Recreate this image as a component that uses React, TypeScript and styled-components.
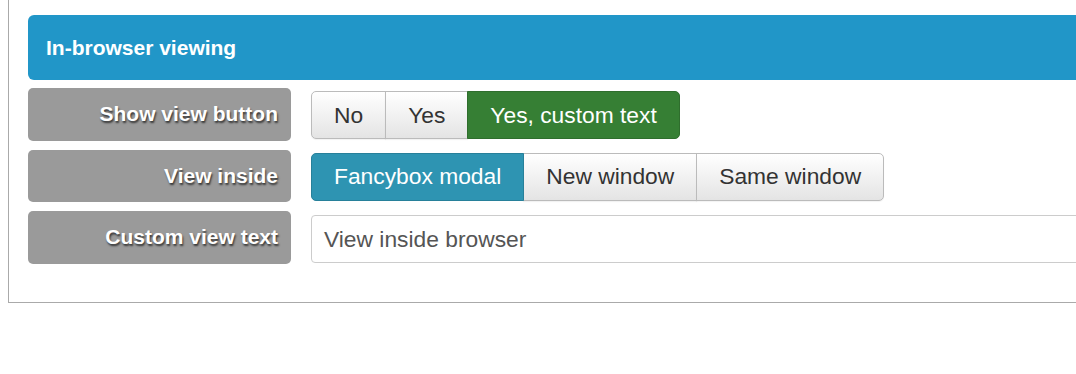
import React from "react";
import styled, { createGlobalStyle, css } from "styled-components";

const Global = createGlobalStyle`
  html { overflow: hidden; }
  body {
    margin: 0 0 0 8px;
    background: #fff;
    font-family: "Liberation Sans", Arial, sans-serif;
  }
`;

const Panel = styled.div`
  width: 1120px;
  border: 1px solid #aaa;
  border-top: none;
  padding: 15px 19px 38px;
  box-sizing: border-box;
`;

const Header = styled.div`
  height: 65px;
  background: #2196c8;
  border-radius: 6px;
  color: #fff;
  font-weight: bold;
  font-size: 21px;
  display: flex;
  align-items: center;
  padding-left: 18px;
  margin-bottom: 8px;
`;

const Rows = styled.div`
  display: flex;
  flex-direction: column;
  gap: 9px;
`;

const Row = styled.div`
  display: flex;
  align-items: flex-start;
  gap: 20px;
`;

const Label = styled.div`
  width: 263px;
  height: 52.5px;
  flex: none;
  box-sizing: border-box;
  background: #9a9a9a;
  border-radius: 5px;
  color: #fff;
  font-weight: bold;
  font-size: 21px;
  text-shadow: 1px 2px 2px rgba(0, 0, 0, 0.65);
  display: flex;
  align-items: center;
  justify-content: flex-end;
  padding-right: 13px;
`;

const Group = styled.div`
  display: flex;
  margin-top: 3px;
`;

type Variant = "default" | "green" | "blue";

const Btn = styled.div<{ $variant: Variant }>`
  height: 48px;
  box-sizing: border-box;
  padding: 0 22px;
  display: flex;
  align-items: center;
  font-size: 22.8px;
  border: 1px solid #bbb;
  margin-left: -1px;
  white-space: nowrap;
  &:first-child { border-radius: 5px 0 0 5px; margin-left: 0; }
  &:last-child { border-radius: 0 5px 5px 0; }
  ${({ $variant }) =>
    $variant === "default"
      ? css`
          color: #333;
          background: linear-gradient(#ffffff, #e4e4e4);
          box-shadow: 0 1px 1px rgba(0, 0, 0, 0.05);
        `
      : $variant === "green"
      ? css`
          color: #fff;
          background: #367f34;
          border-color: #2f6e2d;
          position: relative;
        `
      : css`
          color: #fff;
          background: #2e94b2;
          border-color: #27809a;
          position: relative;
        `}
`;

const Input = styled.div`
  flex: 1;
  height: 48px;
  margin-top: 4px;
  box-sizing: border-box;
  border: 1px solid #ccc;
  border-radius: 4px;
  padding-left: 12px;
  display: flex;
  align-items: center;
  font-size: 22.8px;
  color: #555;
  background: #fff;
`;

const rows: { label: string; options: { text: string; v: Variant }[] }[] = [
  {
    label: "Show view button",
    options: [
      { text: "No", v: "default" },
      { text: "Yes", v: "default" },
      { text: "Yes, custom text", v: "green" },
    ],
  },
  {
    label: "View inside",
    options: [
      { text: "Fancybox modal", v: "blue" },
      { text: "New window", v: "default" },
      { text: "Same window", v: "default" },
    ],
  },
];

export default function App() {
  return (
    <>
      <Global />
      <Panel>
        <Header>In-browser viewing</Header>
        <Rows>
          {rows.map((r) => (
            <Row key={r.label}>
              <Label>{r.label}</Label>
              <Group>
                {r.options.map((o) => (
                  <Btn key={o.text} $variant={o.v}>
                    {o.text}
                  </Btn>
                ))}
              </Group>
            </Row>
          ))}
          <Row>
            <Label>Custom view text</Label>
            <Input>View inside browser</Input>
          </Row>
        </Rows>
      </Panel>
    </>
  );
}
